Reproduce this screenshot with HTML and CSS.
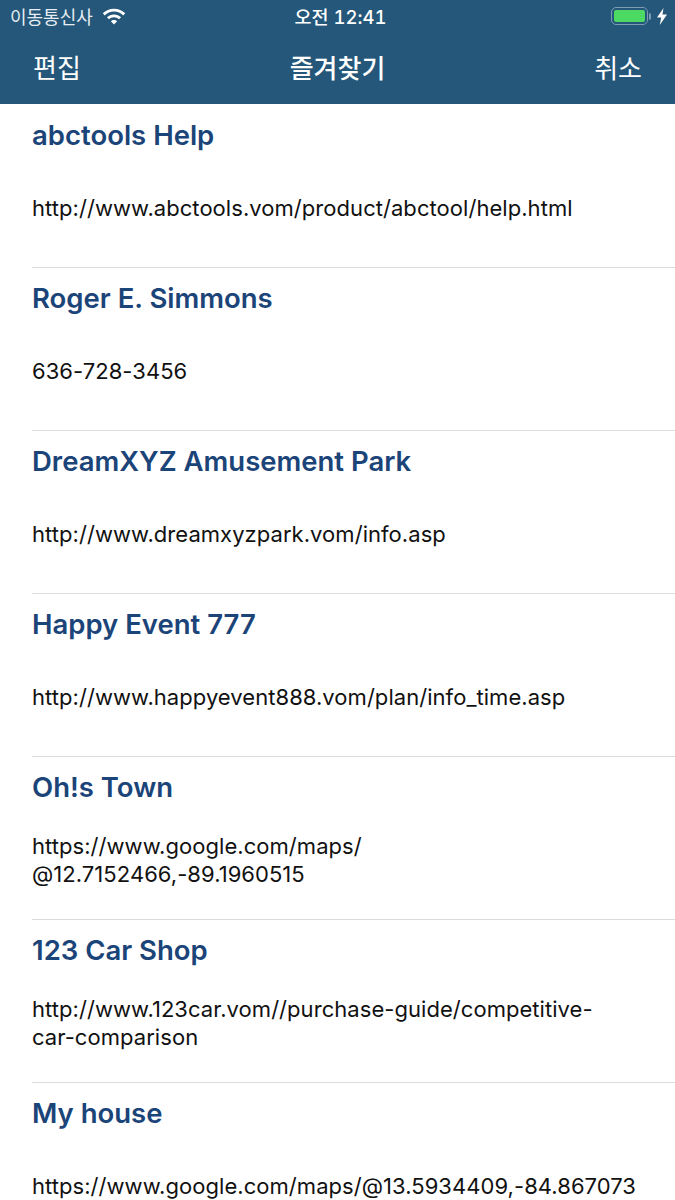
FILE: index.html
```html
<!DOCTYPE html>
<html lang="ko">

<head>
    <meta charset="utf-8">
    <title>즐겨찾기</title>
    <link rel="stylesheet" href="styles.css">
</head>

<body>
    <header class="top-bar">
        <div class="status-bar">
            <div class="status-left">
                <span class="carrier">이동통신사</span>
                <svg class="wifi" width="24" height="17" viewBox="0 0 26 18">
                    <path fill="#fff" d="M13 0.5C8.2 0.5 3.9 2.4 0.8 5.5L3 7.8C5.6 5.3 9.1 3.7 13 3.7s7.4 1.6 10 4.1l2.2-2.3C22.1 2.4 17.8 0.5 13 0.5z" />
                    <path fill="#fff" d="M13 6.7c-3 0-5.700 1.200-7.700 3.100l2.200 2.300c1.400-1.400 3.400-2.200 5.500-2.200s4.100 0.800 5.500 2.200l2.200-2.300C18.700 7.900 16 6.700 13 6.700z" />
                    <path fill="#fff" d="M13 12.800c-1.300 0-2.500 0.500-3.400 1.400l3.400 3.500 3.400-3.500c-0.900-0.900-2.100-1.400-3.400-1.400z" />
                </svg>
            </div>
            <span class="clock">오전 12:41</span>
            <div class="status-right">
                <span class="battery"><span class="battery-fill"></span></span>
                <span class="battery-cap"></span>
                <svg class="bolt" width="12" height="17" viewBox="0 0 12 17">
                    <path fill="#fff" d="M7.500 0L1 9.500h4.200L3.800 17l7.200-10.500H6.500z" />
                </svg>
            </div>
        </div>
        <nav class="nav-bar">
            <span class="nav-btn">편집</span>
            <span class="nav-title">즐겨찾기</span>
            <span class="nav-btn">취소</span>
        </nav>
    </header>

    <ul class="fav-list">
        <li class="fav-row">
            <div class="fav-name">abctools Help</div>
            <div class="fav-detail">http://www.abctools.vom/product/abctool/help.html</div>
        </li>
        <li class="fav-row">
            <div class="fav-name">Roger E. Simmons</div>
            <div class="fav-detail">636-728-3456</div>
        </li>
        <li class="fav-row">
            <div class="fav-name">DreamXYZ Amusement Park</div>
            <div class="fav-detail">http://www.dreamxyzpark.vom/info.asp</div>
        </li>
        <li class="fav-row">
            <div class="fav-name">Happy Event 777</div>
            <div class="fav-detail">http://www.happyevent888.vom/plan/info_time.asp</div>
        </li>
        <li class="fav-row">
            <div class="fav-name">Oh!s Town</div>
            <div class="fav-detail">https://www.google.com/maps/<br>@12.7152466,-89.1960515</div>
        </li>
        <li class="fav-row">
            <div class="fav-name">123 Car Shop</div>
            <div class="fav-detail">http://www.123car.vom//purchase-guide/competitive-<br>car-comparison</div>
        </li>
        <li class="fav-row">
            <div class="fav-name">My house</div>
            <div class="fav-detail">https://www.google.com/maps/@13.5934409,-84.867073</div>
        </li>
    </ul>
</body>

</html>
```

FILE: styles.css
```css
html,
body {
    margin: 0;
    height: 1200px;
    overflow: hidden;
    background: #fff;
    font-family: Inter, "Noto Sans CJK KR", sans-serif;
}

.top-bar {
    height: 104px;
    background: #245779;
    color: #fff;
}

.status-bar {
    height: 32px;
    padding: 0 7px 0 10px;
    display: grid;
    grid-template-columns: 1fr auto 1fr;
    align-items: center;
    font-size: 18px;
}

.status-left {
    display: flex;
    align-items: center;
    gap: 9px;
}

.carrier {
    color: #e6edf2;
}

.clock {
    padding-left: 3px;
    font-size: 18.5px;
    font-weight: 500;
    font-variant-numeric: tabular-nums;
}

.status-right {
    display: flex;
    align-items: center;
    justify-content: flex-end;
}

.battery {
    width: 37px;
    height: 18px;
    box-sizing: border-box;
    padding: 2px;
    border: 1.5px solid #7d9db5;
    border-radius: 5px;
    display: flex;
}

.battery-fill {
    flex: 1;
    background: #4cd964;
    border-radius: 2px;
}

.battery-cap {
    width: 2px;
    height: 7px;
    margin-left: 1px;
    margin-right: 5px;
    background: #7d9db5;
    border-radius: 0 2px 2px 0;
}

.nav-bar {
    height: 72px;
    padding: 0 33px 4px;
    display: flex;
    align-items: center;
    justify-content: space-between;
    box-sizing: border-box;
}

.nav-btn {
    font-size: 26px;
}

.nav-title {
    font-size: 26px;
    font-weight: 500;
}

.fav-list {
    margin: 0;
    padding: 1px 0 0 32px;
    list-style: none;
}

.fav-row {
    height: 163px;
    box-sizing: border-box;
    border-bottom: 1px solid #dcdcde;
}

.fav-name {
    height: 62px;
    line-height: 60px;
    font-size: 27.5px;
    font-weight: 600;
    color: #1b4478;
}

.fav-detail {
    margin-top: 13px;
    height: 55px;
    display: flex;
    flex-direction: column;
    justify-content: center;
    line-height: 28px;
    font-size: 22px;
    letter-spacing: 0.05px;
    color: #111;
}
```
